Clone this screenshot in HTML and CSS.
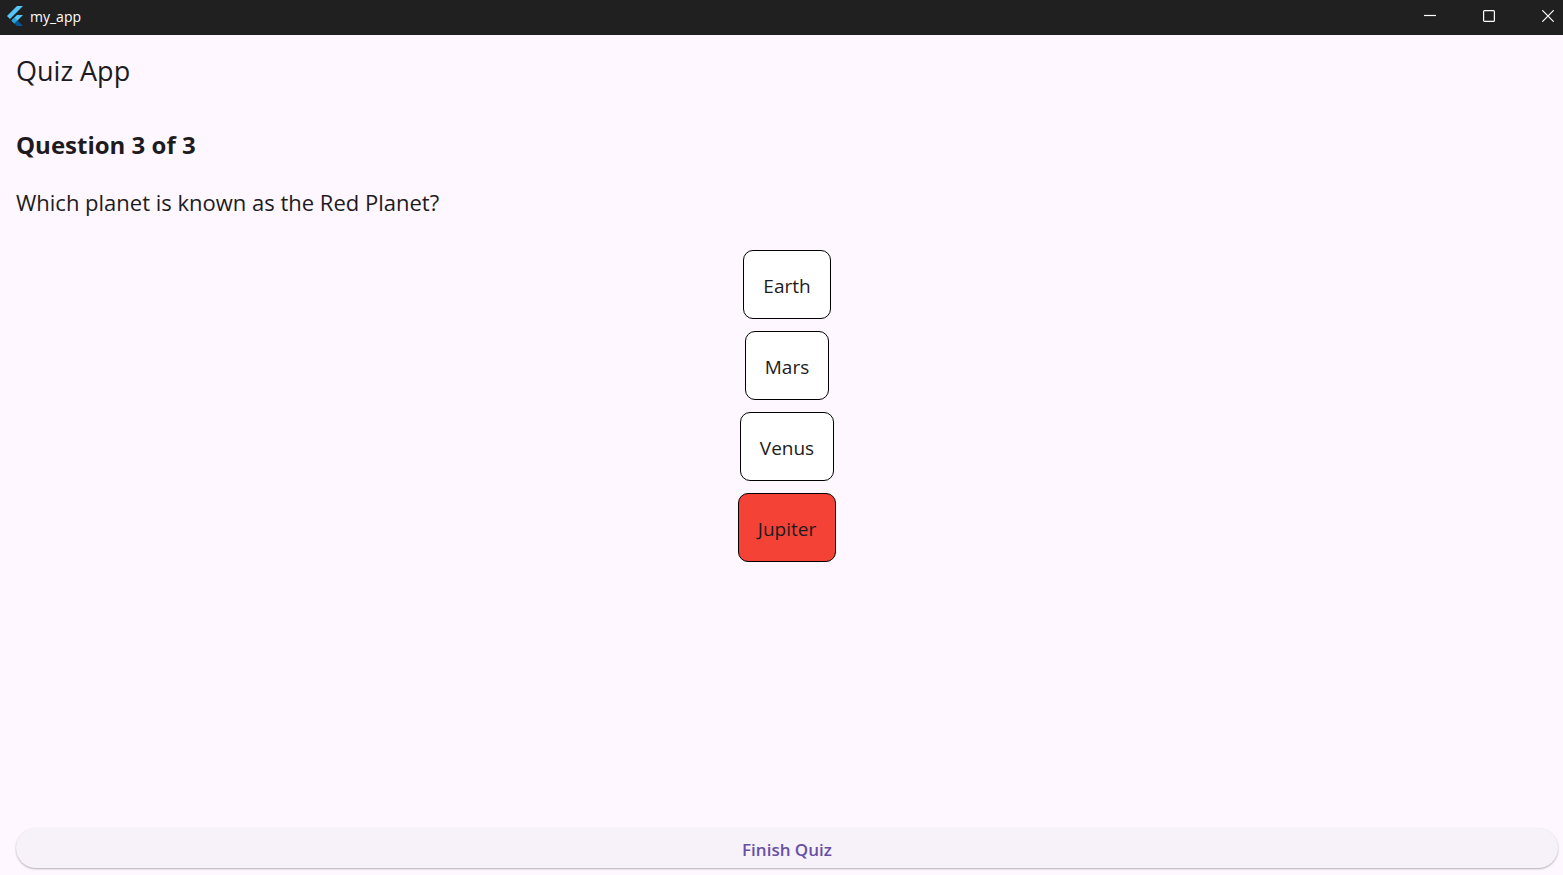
FILE: index.html
```html
<!DOCTYPE html>
<html lang="en">
<head>
<meta charset="utf-8">
<meta name="viewport" content="width=device-width, initial-scale=1">
<title>my_app</title>
<link rel="stylesheet" href="styles.css">
</head>
<body>
<header class="titlebar">
  <svg class="logo" viewBox="0 0 16 20" aria-hidden="true">
    <path fill="#54c5f8" d="M10 0h6L3 13 0 10z"/>
    <path fill="#54c5f8" d="M10 9h6l-5.500 5.500L7.500 17.500 4.500 14.500z"/>
    <path fill="#29a3dc" d="M4.500 14.500l3-3 3 3-3 3z"/>
    <path fill="#01579b" d="M7.500 17.500l3-3L16 20h-6z"/>
  </svg>
  <span class="app-name">my_app</span>
  <div class="window-controls">
    <button class="window-button" aria-label="Minimize"><svg viewBox="0 0 12 12"><path d="M0 5.500h12"/></svg></button>
    <button class="window-button" aria-label="Maximize"><svg viewBox="0 0 12 12"><rect x=".6" y=".6" width="10.800" height="10.800" rx="1"/></svg></button>
    <button class="window-button" aria-label="Close"><svg viewBox="0 0 12 12"><path d="M.3.3l11.400 11.400M11.700.3L.3 11.700"/></svg></button>
  </div>
</header>
<main class="quiz">
  <h1 class="quiz-title">Quiz App</h1>
  <h2 class="progress">Question 3 of 3</h2>
  <p class="question">Which planet is known as the Red Planet?</p>
  <div class="options">
    <button class="option">Earth</button>
    <button class="option">Mars</button>
    <button class="option">Venus</button>
    <button class="option option-wrong">Jupiter</button>
  </div>
  <button class="finish">Finish Quiz</button>
</main>
</body>
</html>
```
FILE: styles.css
```css
* {
  box-sizing: border-box;
}

body {
  margin: 0;
  min-height: 100vh;
  display: flex;
  flex-direction: column;
  background: #fef7ff;
  color: #1d1b20;
  font-family: "Open Sans", "Noto Sans", sans-serif;
}

button {
  font-family: inherit;
  color: inherit;
  cursor: pointer;
}

.titlebar {
  display: flex;
  align-items: center;
  height: 35px;
  padding: 0 9px 3px 7px;
  background: #202020;
  color: #fff;
}

.logo {
  width: 16px;
  height: 20px;
}

.app-name {
  margin-left: 7px;
  padding-top: 2px;
  font-size: 14px;
  line-height: 20px;
}

.window-controls {
  display: flex;
  gap: 47px;
  margin-left: auto;
}

.window-button {
  display: flex;
  padding: 0;
  border: 0;
  background: none;
}

.window-button svg {
  width: 12px;
  height: 12px;
  fill: none;
  stroke: #fff;
  stroke-width: 1.2;
}

.quiz {
  flex: 1;
  display: flex;
  flex-direction: column;
  padding: 16px 5px 7px 16px;
}

.quiz-title {
  margin: 0;
  font-size: 27px;
  line-height: 40px;
  font-weight: 400;
}

.progress {
  margin: 36px 0 0;
  font-size: 24px;
  line-height: 36px;
  font-weight: 700;
}

.question {
  margin: 21px 0 0;
  font-size: 22px;
  line-height: 36px;
}

.options {
  display: flex;
  flex-direction: column;
  align-items: center;
  gap: 12px;
  margin-top: 30px;
}

.option {
  height: 69px;
  padding: 2px 19px 0;
  border: 1px solid #000;
  border-radius: 10px;
  background: #fff;
  font-size: 19px;
}

.option-wrong {
  background: #f44336;
}

.finish {
  height: 40px;
  margin-top: auto;
  padding: 3px 0 0;
  border: 0;
  border-radius: 20px;
  background: #f7f2fa;
  box-shadow: 0 1px 2px rgba(0, 0, 0, 0.3);
  color: #6750a4;
  font-size: 17px;
  font-weight: 600;
}
```
